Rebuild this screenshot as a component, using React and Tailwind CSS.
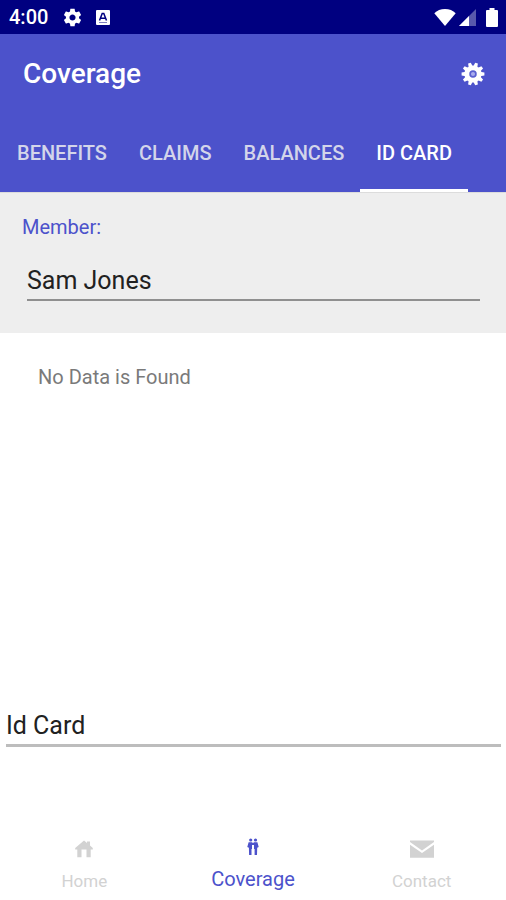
import { useState } from 'react'

const TABS = ['BENEFITS', 'CLAIMS', 'BALANCES', 'ID CARD']

const GEAR_PATH = 'M19.43 12.98c.04-.32.07-.64.07-.98s-.03-.66-.07-.98l2.11-1.65c.19-.15.24-.42.12-.64l-2-3.46c-.12-.22-.39-.3-.61-.22l-2.49 1c-.52-.4-1.08-.73-1.69-.98l-.38-2.65C14.46 2.18 14.25 2 14 2h-4c-.25 0-.46.18-.49.42l-.38 2.65c-.61.25-1.17.59-1.69.98l-2.49-1c-.23-.09-.49 0-.61.22l-2 3.46c-.13.22-.07.49.12.64l2.11 1.65c-.04.32-.07.65-.07.98s.03.66.07.98l-2.11 1.65c-.19.15-.24.42-.12.64l2 3.46c.12.22.39.3.61.22l2.49-1c.52.4 1.08.73 1.69.98l.38 2.65c.03.24.24.42.49.42h4c.25 0 .46-.18.49-.42l.38-2.65c.61-.25 1.17-.59 1.69-.98l2.49 1c.23.09.49 0 .61-.22l2-3.46c.12-.22.07-.49-.12-.64l-2.11-1.65zM12 15.5c-1.93 0-3.5-1.57-3.5-3.5s1.57-3.5 3.5-3.5 3.5 1.57 3.5 3.5-1.57 3.5-3.5 3.5z'

const TEETH = [0, 36, 72, 108, 144, 180, 216, 252, 288, 324]

function CogIcon() {
  return (
    <svg viewBox="0 0 24 24" className="w-6 h-6" fill="currentColor" aria-hidden="true">
      {TEETH.map(a => (
        <path key={a} d="M9.8 5 10.6 .6h2.8l.8 4.400z" transform={`rotate(${a + 18} 12 12)`} />
      ))}
      <circle cx="12" cy="12" r="8.600" />
      <circle cx="12" cy="12" r="2.900" fill="#a9acee" stroke="#5a60d0" strokeWidth="1.700" />
    </svg>
  )
}

function HomeIcon() {
  return (
    <svg viewBox="0 0 18 18" className="w-[18px] h-[18px]" fill="currentColor" aria-hidden="true">
      <path d="M9 .6 12 3V1.400h3V5.400l2.800 2.500v1.600h-2.100v7.800h-4.200V9.500h-5v7.800H2.300V9.500H.2V7.900z" />
    </svg>
  )
}

function PeopleIcon() {
  return (
    <svg viewBox="0 0 12 18" className="w-3 h-[18px]" fill="currentColor" aria-hidden="true">
      <circle cx="3.700" cy="2" r="1.600" />
      <circle cx="8.500" cy="2" r="1.600" />
      <path d="M1.600 4.200h3.500l.9 1 .9-1h3.500L11.700 9l-1.500.8-.2 7.200H7.600V11H7V7H5v4h-.5v6H2.100L1.900 9.800.3 9z" />
    </svg>
  )
}

function MailIcon() {
  return (
    <svg viewBox="0 0 24 18" className="w-6 h-[18px]" fill="currentColor" aria-hidden="true">
      <path d="M0 .5h24v1.600l-12 8.300L0 2.100z" />
      <path d="M0 4.700l12 8.200 12-8.200v13H0z" />
    </svg>
  )
}

function StatusBar() {
  return (
    <div className="flex items-center h-[34px] pl-[9px] pr-2 bg-[#000080] text-white">
      <span className="text-[20px] leading-6 font-medium">4:00</span>
      <svg viewBox="0 0 24 24" className="w-[21px] h-[21px] ml-[14px]" fill="currentColor" aria-hidden="true">
        <path d={GEAR_PATH} />
      </svg>
      <svg viewBox="0 0 14 15" className="w-[14px] h-[15px] ml-[13px]" aria-hidden="true">
        <rect width="14" height="15" rx="1" fill="#fff" />
        <path d="M3.500 10.500 6.200 3.500h1.600l2.700 7M4.800 8.300h4.400" fill="none" stroke="#000080" strokeWidth="1.500" />
        <path d="M3 12.500h8" stroke="#8080c0" />
      </svg>
      <div className="flex items-center ml-auto">
        <svg viewBox="0 0 22 17" className="w-[22px] h-[17px]" fill="currentColor" aria-hidden="true">
          <path d="M11 17 .3 4.200C3 1.600 6.800 0 11 0s8 1.600 10.700 4.200z" />
        </svg>
        <svg viewBox="0 0 17 17" className="w-[17px] h-[17px] ml-[3px]" fill="currentColor" aria-hidden="true">
          <path d="M0 17 17 0v17z" opacity=".35" />
          <path d="M0 17 10 7v10z" />
        </svg>
        <svg viewBox="0 0 12 19" className="w-3 h-[19px] ml-[10px]" fill="currentColor" aria-hidden="true">
          <path d="M3.500 0h5v2H11a1 1 0 0 1 1 1v15a1 1 0 0 1-1 1H1a1 1 0 0 1-1-1V3a1 1 0 0 1 1-1h2.500z" />
        </svg>
      </div>
    </div>
  )
}

export default function App() {
  const [tab, setTab] = useState('ID CARD')
  const [member, setMember] = useState('Sam Jones')
  const [section, setSection] = useState('Id Card')

  return (
    <div className="flex flex-col min-h-screen bg-white font-['Roboto',sans-serif]">
      <StatusBar />

      {/* App bar */}
      <header className="bg-[#4c52cb] text-white">
        <div className="flex items-center justify-between h-20 pl-[23px] pr-[21px]">
          <h1 className="text-[28px] leading-8 font-medium">Coverage</h1>
          <button aria-label="Settings"><CogIcon /></button>
        </div>
        <div role="tablist" className="flex h-[78px] pl-px">
          {TABS.map(t => (
            <button
              key={t}
              role="tab"
              aria-selected={tab === t}
              onClick={() => setTab(t)}
              className={`px-4 pt-[3px] border-b-[3px] text-[20px] leading-6 font-medium whitespace-nowrap ${tab === t ? 'border-white text-white' : 'border-transparent text-[#d3d5ea]'}`}
            >
              {t}
            </button>
          ))}
        </div>
      </header>

      {/* Member */}
      <section className="h-[141px] px-[22px] pt-[22px] bg-[#eeeeee] border-t border-[#dcdcdc]">
        <label htmlFor="member" className="block text-[20px] leading-6 text-[#4c52cb]">Member:</label>
        <div className="pl-[5px] pr-1 pt-[22px]">
          <input id="member" value={member} onChange={e => setMember(e.target.value)} className="block w-full h-10 border-b-2 border-[#8f8f8f] bg-transparent text-[25px] text-[#212121] outline-none" />
        </div>
      </section>

      <main className="flex flex-col flex-1">
        <p className="px-[38px] pt-8 text-[20px] leading-6 text-[#7a7a7a]">No Data is Found</p>
        <div className="mt-auto pl-[6px] pr-[5px] pb-[73px]">
          <input aria-label="Section" value={section} onChange={e => setSection(e.target.value)} className="block w-full h-10 border-b-[3px] border-[#bdbdbd] bg-transparent text-[25px] text-[#212121] outline-none" />
        </div>
      </main>

      {/* Bottom navigation */}
      <nav className="grid grid-cols-3 h-20 text-[#d2d2d2]">
        <a href="#home" className="flex flex-col items-center pt-5">
          <HomeIcon />
          <span className="mt-[11px] text-[17px] leading-6">Home</span>
        </a>
        <a href="#coverage" aria-current="page" className="flex flex-col items-center pt-[18px] text-[#4c52cb]">
          <PeopleIcon />
          <span className="mt-[11px] text-[20px] leading-6">Coverage</span>
        </a>
        <a href="#contact" className="flex flex-col items-center pt-5">
          <MailIcon />
          <span className="mt-[11px] text-[17px] leading-6">Contact</span>
        </a>
      </nav>
    </div>
  )
}
